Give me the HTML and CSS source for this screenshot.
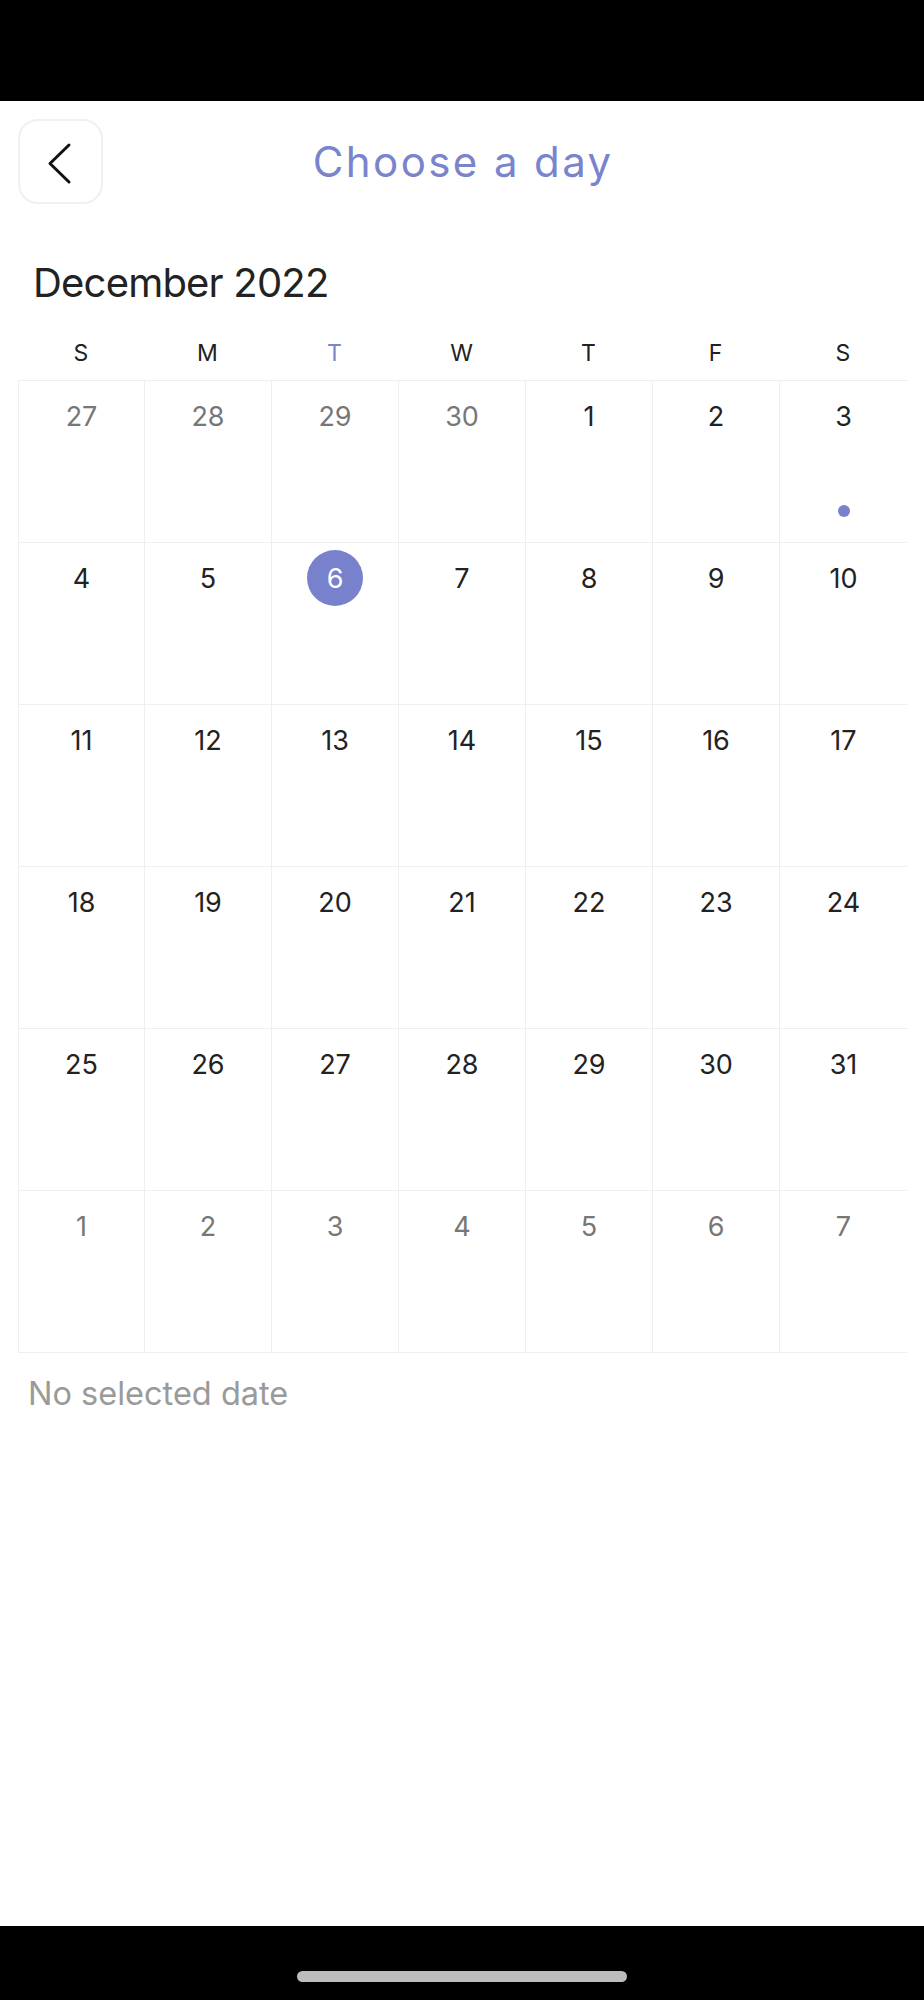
FILE: index.html
```html
<!DOCTYPE html>
<html lang="en">
<head>
<meta charset="utf-8">
<title>Choose a day</title>
<link rel="stylesheet" href="styles.css">
</head>
<body>
<div class="screen">
  <div class="status-bar"></div>
  <header class="header">
    <button class="back-btn" aria-label="Back">
      <svg width="85" height="85" viewBox="0 0 85 85" aria-hidden="true">
        <polyline points="51,26 32,44.5 51,63" fill="none" stroke="#111" stroke-width="3" stroke-linecap="round" stroke-linejoin="round"/>
      </svg>
    </button>
    <h1 class="title">Choose a day</h1>
    <div class="spacer"></div>
  </header>

  <h2 class="month">December 2022</h2>

  <div class="weekdays">
    <div class="wd">S</div>
    <div class="wd">M</div>
    <div class="wd wd-today">T</div>
    <div class="wd">W</div>
    <div class="wd">T</div>
    <div class="wd">F</div>
    <div class="wd">S</div>
  </div>

  <div class="grid">
    <div class="cell"><span class="num other">27</span></div>
    <div class="cell"><span class="num other">28</span></div>
    <div class="cell"><span class="num other">29</span></div>
    <div class="cell"><span class="num other">30</span></div>
    <div class="cell"><span class="num">1</span></div>
    <div class="cell"><span class="num">2</span></div>
    <div class="cell"><span class="num">3</span><span class="dot"></span></div>

    <div class="cell"><span class="num">4</span></div>
    <div class="cell"><span class="num">5</span></div>
    <div class="cell"><span class="num selected">6</span></div>
    <div class="cell"><span class="num">7</span></div>
    <div class="cell"><span class="num">8</span></div>
    <div class="cell"><span class="num">9</span></div>
    <div class="cell"><span class="num">10</span></div>

    <div class="cell"><span class="num">11</span></div>
    <div class="cell"><span class="num">12</span></div>
    <div class="cell"><span class="num">13</span></div>
    <div class="cell"><span class="num">14</span></div>
    <div class="cell"><span class="num">15</span></div>
    <div class="cell"><span class="num">16</span></div>
    <div class="cell"><span class="num">17</span></div>

    <div class="cell"><span class="num">18</span></div>
    <div class="cell"><span class="num">19</span></div>
    <div class="cell"><span class="num">20</span></div>
    <div class="cell"><span class="num">21</span></div>
    <div class="cell"><span class="num">22</span></div>
    <div class="cell"><span class="num">23</span></div>
    <div class="cell"><span class="num">24</span></div>

    <div class="cell"><span class="num">25</span></div>
    <div class="cell"><span class="num">26</span></div>
    <div class="cell"><span class="num">27</span></div>
    <div class="cell"><span class="num">28</span></div>
    <div class="cell"><span class="num">29</span></div>
    <div class="cell"><span class="num">30</span></div>
    <div class="cell"><span class="num">31</span></div>

    <div class="cell"><span class="num other">1</span></div>
    <div class="cell"><span class="num other">2</span></div>
    <div class="cell"><span class="num other">3</span></div>
    <div class="cell"><span class="num other">4</span></div>
    <div class="cell"><span class="num other">5</span></div>
    <div class="cell"><span class="num other">6</span></div>
    <div class="cell"><span class="num other">7</span></div>
  </div>

  <p class="empty">No selected date</p>

  <div class="fill"></div>
  <div class="home-bar"><span class="home-indicator"></span></div>
</div>
</body>
</html>
```

FILE: styles.css
```css
* { box-sizing: border-box; }

html, body {
  margin: 0;
  padding: 0;
  background: #ffffff;
}

body {
  font-family: Inter, "Liberation Sans", sans-serif;
  color: #222222;
}

.screen {
  width: 924px;
  height: 2000px;
  display: flex;
  flex-direction: column;
  overflow: hidden;
}

.status-bar {
  height: 101px;
  background: #000000;
  flex: none;
}

.header {
  display: grid;
  grid-template-columns: 85px 1fr 85px;
  align-items: center;
  padding: 18px 18px 0;
}

.back-btn {
  width: 85px;
  height: 85px;
  padding: 0;
  border: 2px solid #efeff7;
  border-radius: 20px;
  background: #ffffff;
  display: flex;
  align-items: center;
  justify-content: center;
}

.back-btn svg {
  display: block;
  margin: -2px;
}

.title {
  margin: 0;
  text-align: center;
  font-family: Inter, "Liberation Sans", sans-serif;
  font-weight: 400;
  font-size: 42px;
  line-height: 50px;
  color: #7a84cc;
  letter-spacing: 2.4px;
  text-indent: 2.4px;
}

.month {
  margin: 55px 0 0 33px;
  font-weight: 400;
  font-size: 40px;
  line-height: 48px;
  letter-spacing: -0.8px;
  color: #222222;
}

.weekdays {
  margin: 35px 17px 15px 18px;
  display: grid;
  grid-template-columns: 126px repeat(5, 127px) 128px;
  height: 23px;
}

.wd {
  text-align: center;
  font-size: 23px;
  line-height: 23px;
  color: #222222;
}

.wd-today { color: #7a84cc; }

.grid {
  margin-left: 18px;
  width: 889px;
  display: grid;
  grid-template-columns: 126px repeat(5, 127px) 128px;
  grid-auto-rows: 162px;
  border-top: 1px solid #efeff1;
}

.cell {
  border-left: 1px solid #efeff1;
  border-bottom: 1px solid #efeff1;
  display: flex;
  flex-direction: column;
  align-items: center;
  padding-top: 7px;
}

.num {
  width: 56px;
  height: 56px;
  border-radius: 50%;
  display: flex;
  align-items: center;
  justify-content: center;
  font-size: 27px;
  line-height: 1;
  color: #222222;
}

.num.other { color: #777777; }

.num.selected {
  background: #7882cc;
  color: #ffffff;
}

.dot {
  margin-top: 60.5px;
  width: 12px;
  height: 12px;
  border-radius: 50%;
  background: #7882cc;
}

.empty {
  margin: 21px 0 0 28px;
  font-size: 32.5px;
  line-height: 39px;
  color: #9a9a9a;
}

.fill { flex: 1; }

.home-bar {
  flex: none;
  height: 74px;
  background: #000000;
  display: flex;
  justify-content: center;
  padding-top: 45px;
}

.home-indicator {
  width: 330px;
  height: 11px;
  border-radius: 6px;
  background: #bdbdbd;
}
```
